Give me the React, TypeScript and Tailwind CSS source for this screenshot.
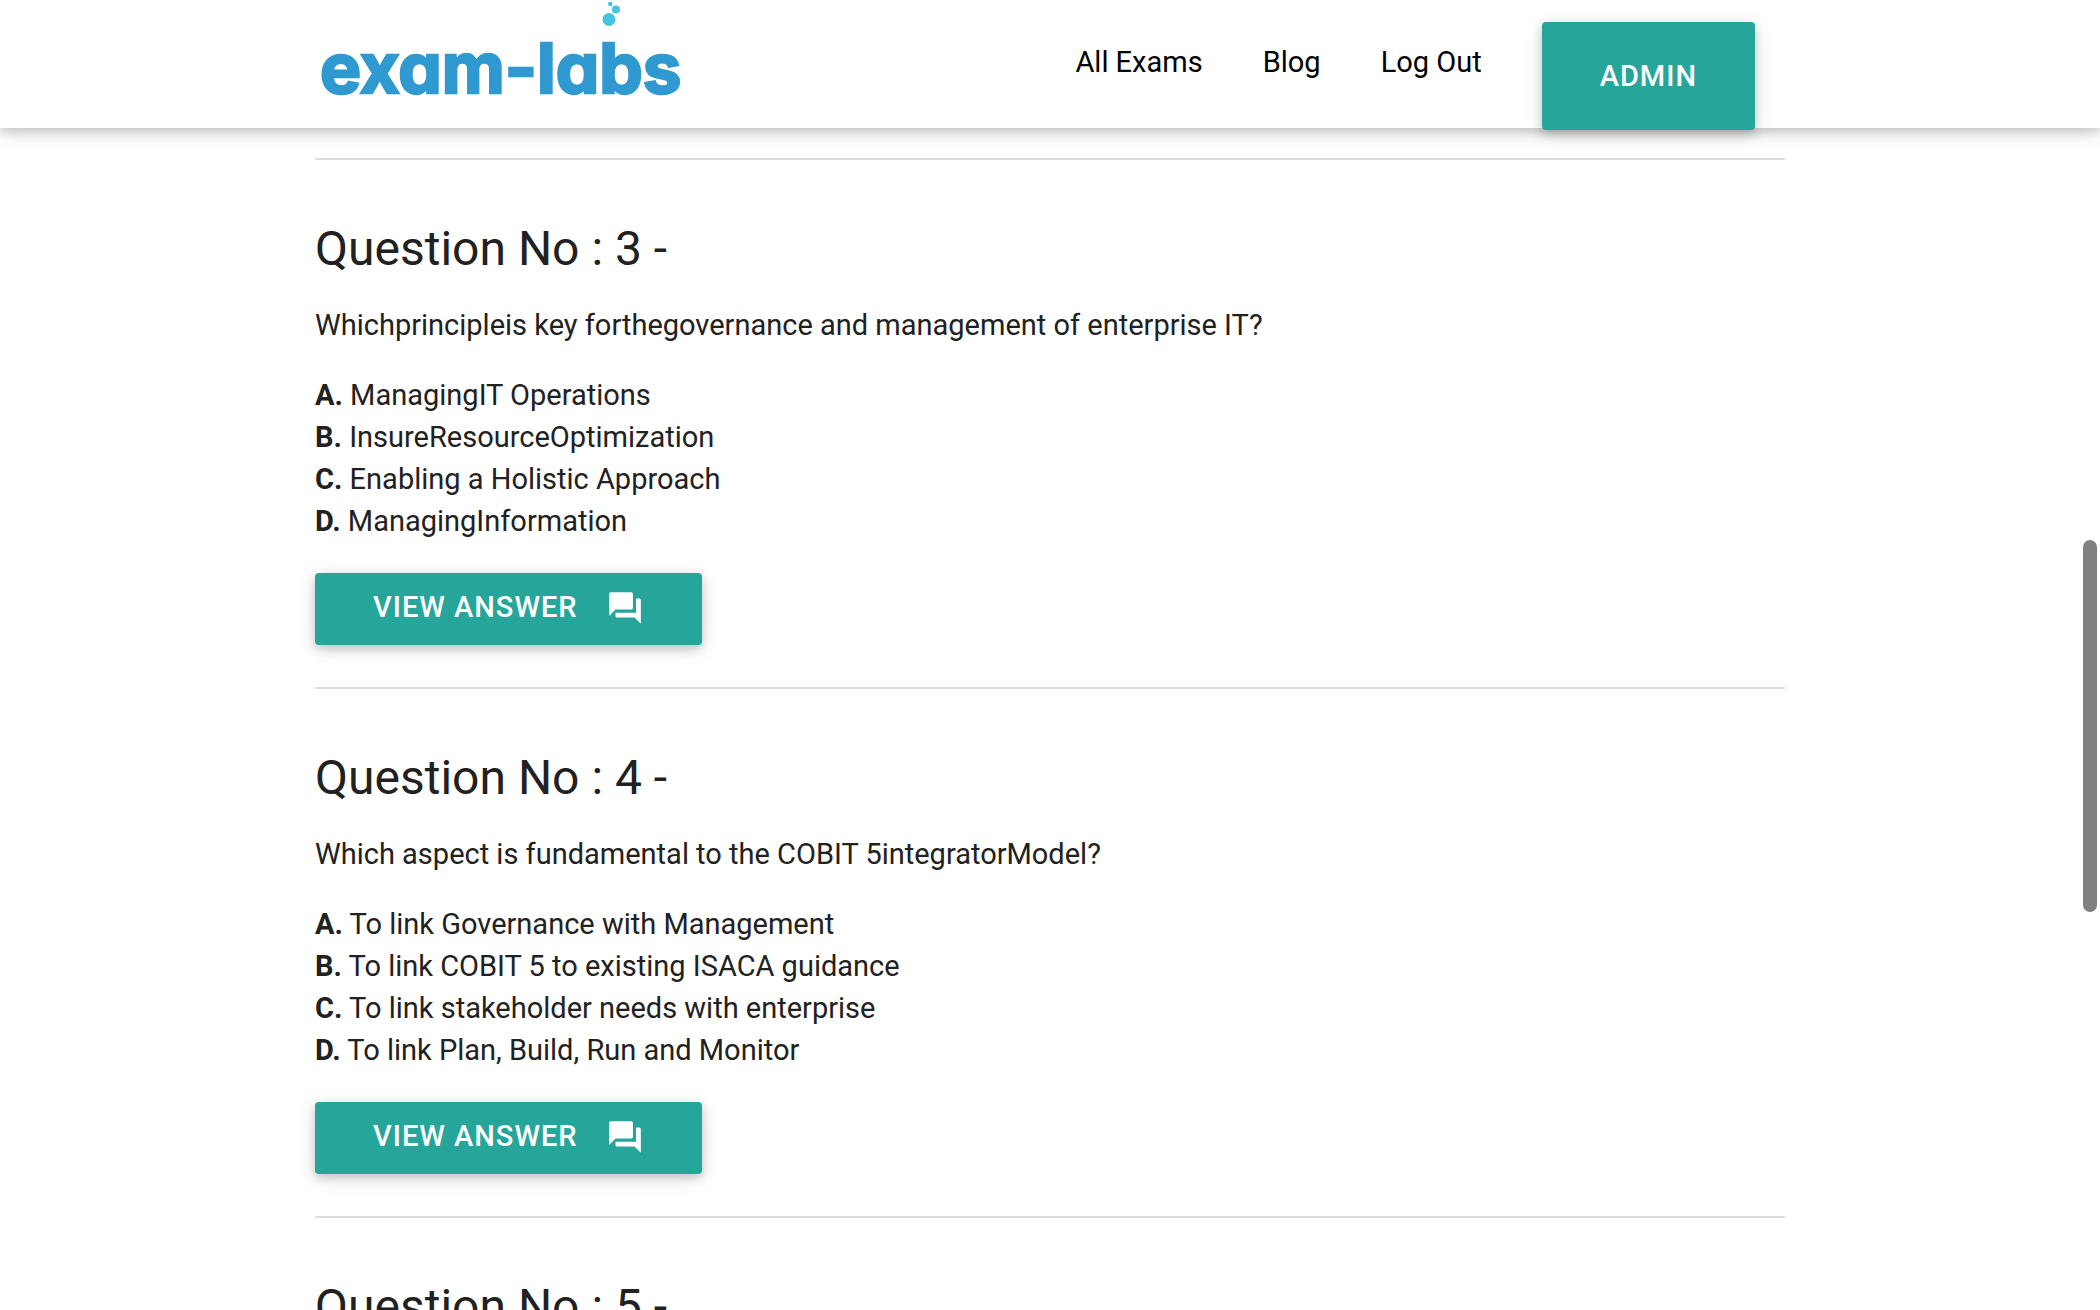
import React from 'react';
import { MdQuestionAnswer } from 'react-icons/md';

interface Question {
    number: number;
    text: string;
    options: string[];
}

const questions: Question[] = [
    {
        number: 3,
        text: 'Whichprincipleis key forthegovernance and management of enterprise IT?',
        options: [
            'ManagingIT Operations',
            'InsureResourceOptimization',
            'Enabling a Holistic Approach',
            'ManagingInformation',
        ],
    },
    {
        number: 4,
        text: 'Which aspect is fundamental to the COBIT 5integratorModel?',
        options: [
            'To link Governance with Management',
            'To link COBIT 5 to existing ISACA guidance',
            'To link stakeholder needs with enterprise',
            'To link Plan, Build, Run and Monitor',
        ],
    },
    { number: 5, text: '', options: [] },
];

const navLinks = ['All Exams', 'Blog', 'Log Out'];
const letters = ['A', 'B', 'C', 'D'];

function Logo() {
    return (
        <svg width="368" height="128" viewBox="0 0 368 128" role="img" aria-label="exam-labs">
            <text
                x="5"
                y="93"
                fill="#2f99d0"
                stroke="#2f99d0"
                strokeWidth="2.5"
                className="font-['Inter',sans-serif] text-[69px] font-bold [font-feature-settings:'cv11']"
            >
                exam-labs
            </text>
            {/* Bubbles */}
            <circle cx="294" cy="19.5" r="6.5" fill="#46c3e3" />
            <circle cx="301" cy="9.5" r="4" fill="#46c3e3" />
            <circle cx="295.3" cy="4" r="2.3" fill="#46c3e3" />
        </svg>
    );
}

function Header() {
    return (
        <header className="relative z-10 h-32 bg-white shadow-[0_4px_10px_0_rgba(0,0,0,0.16),0_4px_20px_0_rgba(0,0,0,0.12)]">
            <div className="mx-auto flex w-[70%] items-start justify-between">
                <a href="#home">
                    <Logo />
                </a>
                <nav className="flex items-start text-black">
                    {navLinks.map((label) => (
                        <a key={label} href="#nav" className="px-[30px] leading-[124px]">
                            {label}
                        </a>
                    ))}
                    <button
                        type="button"
                        className="mx-[30px] mt-[22px] h-[108px] rounded-[4px] bg-[#26a69a] px-[58px] font-medium uppercase tracking-[1px] text-white shadow-[0_4px_10px_0_rgba(0,0,0,0.16),0_4px_20px_0_rgba(0,0,0,0.12)]"
                    >
                        Admin
                    </button>
                </nav>
            </div>
        </header>
    );
}

function QuestionCard({ number, text, options }: Question) {
    return (
        <section className="border-t-2 border-[#ddd] pt-[63px] pb-[42px]">
            <h5 className="mb-[29px] text-[48px] leading-[52px]">Question No : {number} -</h5>
            <p className="mb-[28px]">{text}</p>
            <ul className="mb-[31px]">
                {options.map((option, i) => (
                    <li key={option}>
                        <b>{letters[i]}.</b> {option}
                    </li>
                ))}
            </ul>
            <button
                type="button"
                className="flex h-[72px] items-center gap-[28px] rounded-[4px] bg-[#26a69a] px-[58px] pb-[2px] font-medium uppercase tracking-[1px] text-white shadow-[0_4px_10px_0_rgba(0,0,0,0.16),0_4px_20px_0_rgba(0,0,0,0.12)]"
            >
                <span className="pb-[2px]">View Answer</span>
                <MdQuestionAnswer className="size-[38px]" />
            </button>
        </section>
    );
}

export default function App() {
    return (
        <div className="relative h-screen overflow-hidden bg-white font-['Roboto',sans-serif] text-[29px] leading-[42px] text-[#212121]">
            <Header />
            <main className="mx-auto w-[70%] pt-[30px]">
                {questions.map((question) => (
                    <QuestionCard key={question.number} {...question} />
                ))}
            </main>
            {/* Overlay scrollbar thumb */}
            <div className="absolute top-[540px] right-[3px] z-20 h-[372px] w-[14px] rounded-full bg-[#808080]"></div>
        </div>
    );
}
